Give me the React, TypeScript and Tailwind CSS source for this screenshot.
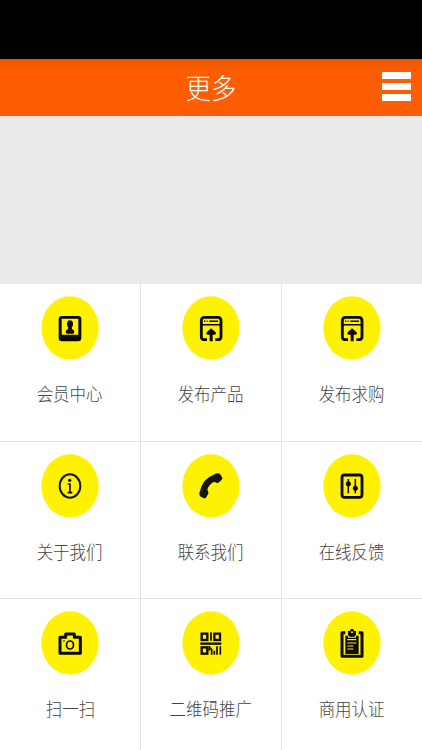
import React from 'react';

interface MenuItem {
  label: string;
  icon: React.ReactNode;
}

const MemberIcon = () => (
  <>
    <path
      fillRule="evenodd"
      d="M-24 -36H24Q34 -36 34 -26V30Q34 40 24 40H-24Q-34 40 -34 30V-26Q-34 -36 -24 -36ZM-25 -28V20H25V-28Z"
    />
    <ellipse cx="0" cy="-12" rx="9" ry="11" />
    <path d="M-5 -4H5L6 3Q13 6 13 12Q13 17 8 17H-8Q-13 17 -13 12Q-13 6 -6 3Z" />
  </>
);

const PublishIcon = () => (
  <>
    <path
      d="M-12 35H-19Q-29 35 -29 26V-22Q-29 -32 -19 -32H20Q30 -32 30 -22V26Q30 35 20 35H13"
      fill="none"
      stroke="#0a0a00"
      strokeWidth="8.5"
    />
    <path d="M-29 -10H30M-5 -20H21" fill="none" stroke="#0a0a00" strokeWidth="4.5" />
    <path d="M-21 -20H-17M-13 -20H-10" fill="none" stroke="#0a0a00" strokeWidth="4.5" />
    <path d="M0 1L14 13Q17 20 10 20H5V40H-4V20H-9Q-16 20 -13 13Z" />
  </>
);

const InfoIcon = () => (
  <>
    <ellipse cx="0" cy="0" rx="31" ry="35" fill="none" stroke="#15150a" strokeWidth="6" />
    <circle cx="-1" cy="-17" r="5" />
    <path d="M-7 -6H0V20M-7 20H7" fill="none" stroke="#15150a" strokeWidth="5" />
  </>
);

const PhoneIcon = () => (
  <path
    fill="#15150f"
    d="M8 -34Q14 -38 21 -38Q27 -38 29 -33L33 -27Q36 -22 32 -18L22 -10Q17 -7 13 -11L9 -13Q1 -9 -6 0Q-10 6 -11 11L-9 15Q-6 20 -9 25L-14 34Q-17 39 -23 36L-31 32Q-37 28 -34 18Q-30 0 -20 -14Q-12 -25 8 -34Z"
  />
);

const FeedbackIcon = () => (
  <>
    <rect x="-30" y="-33" width="60" height="67" rx="8" fill="none" stroke="#0a0a00" strokeWidth="8.5" />
    <path d="M-11 -21V22M10 -21V22" fill="none" stroke="#0a0a00" strokeWidth="4.5" />
    <circle cx="-11" cy="-7" r="7.5" />
    <circle cx="10" cy="7" r="7.5" />
  </>
);

const CameraIcon = () => (
  <>
    <path
      d="M-30 -17H-13V-27H13V-17H31V31H-30Z"
      fill="none"
      stroke="#0a0a00"
      strokeWidth="9"
      strokeLinejoin="round"
    />
    <ellipse cx="0" cy="6" rx="10.5" ry="12" fill="none" stroke="#0a0a00" strokeWidth="5" />
    <circle cx="-18" cy="-6" r="2.5" />
  </>
);

const QrIcon = () => (
  <>
    <g fill="none" stroke="#0a0a00" strokeWidth="7">
      <rect x="-28" y="-28" width="17" height="19" />
      <rect x="10" y="-28" width="17" height="19" />
      <rect x="-28" y="13" width="17" height="19" />
      <path d="M-32 2H31" />
    </g>
    <path
      d="M0 -32V-7M-5 10V23M2 18V35M10 23V35M18 10V35M28 10V35"
      fill="none"
      stroke="#0a0a00"
      strokeWidth="5"
    />
    <path d="M-6 10L3 21" fill="none" stroke="#0a0a00" strokeWidth="4" />
  </>
);

const ClipboardIcon = () => (
  <>
    <path
      d="M-20 -31H-30V40H30V-31H20"
      fill="none"
      stroke="#0a0a00"
      strokeWidth="9"
      strokeLinejoin="round"
    />
    <path d="M-20 -22H-12V-16H12V-22H20V33H-20Z" />
    <path d="M-12 -36H-6Q-5 -43 0 -43Q5 -43 6 -36H12V-24L7 -19H-7L-12 -24Z" />
    <circle cx="0" cy="-32" r="3" fill="#fff200" />
    <path d="M-14 -10H13M-14 0H13M-14 9H4M-14 18H4" fill="none" stroke="#fff200" strokeWidth="3.5" />
  </>
);

const items: MenuItem[] = [
  { label: '会员中心', icon: <MemberIcon /> },
  { label: '发布产品', icon: <PublishIcon /> },
  { label: '发布求购', icon: <PublishIcon /> },
  { label: '关于我们', icon: <InfoIcon /> },
  { label: '联系我们', icon: <PhoneIcon /> },
  { label: '在线反馈', icon: <FeedbackIcon /> },
  { label: '扫一扫', icon: <CameraIcon /> },
  { label: '二维码推广', icon: <QrIcon /> },
  { label: '商用认证', icon: <ClipboardIcon /> },
];

const Header = () => (
  <header className="grid h-[57px] grid-cols-[1fr_auto_1fr] items-center bg-linear-to-b from-[#e65600] to-[#fe5d04] to-[20%] pb-px">
    <span />
    <h1 className="origin-center scale-x-90 text-[28px] leading-[56px] font-light text-white">更多</h1>
    <button className="mr-[11px] flex w-[29px] flex-col gap-1 justify-self-end pb-px" aria-label="菜单">
      <span className="h-[7px] w-full bg-white" />
      <span className="h-[7px] w-full bg-white" />
      <span className="h-[7px] w-full bg-white" />
    </button>
  </header>
);

const MenuCell = ({ label, icon }: MenuItem) => (
  <button className="flex flex-col items-center overflow-hidden border-r border-b border-[#e3e3e3] pt-3 nth-[3n]:border-r-0">
    <svg className="h-16 w-[58px] shrink-0" viewBox="-87 -96 174 192" fill="#0a0a00">
      <ellipse cx="0" cy="0" rx="86" ry="95" fill="#fff200" />
      {icon}
    </svg>
    <span className="mt-5 scale-x-90 text-[18.3px] leading-[27px] font-light whitespace-nowrap text-[#444]">
      {label}
    </span>
  </button>
);

export default function App() {
  return (
    <div className="flex h-[750px] w-[422px] flex-col overflow-hidden bg-white font-['Noto_Sans_CJK_SC',sans-serif]">
      <div className="h-[59px] shrink-0 bg-black" />
      <Header />
      <div className="h-[168px] shrink-0 bg-[#eaeaea]" />
      <main className="grid shrink-0 grid-cols-[141px_141px_140px] grid-rows-[158px_157px_157px]">
        {items.map((item) => (
          <MenuCell key={item.label} {...item} />
        ))}
      </main>
    </div>
  );
}
